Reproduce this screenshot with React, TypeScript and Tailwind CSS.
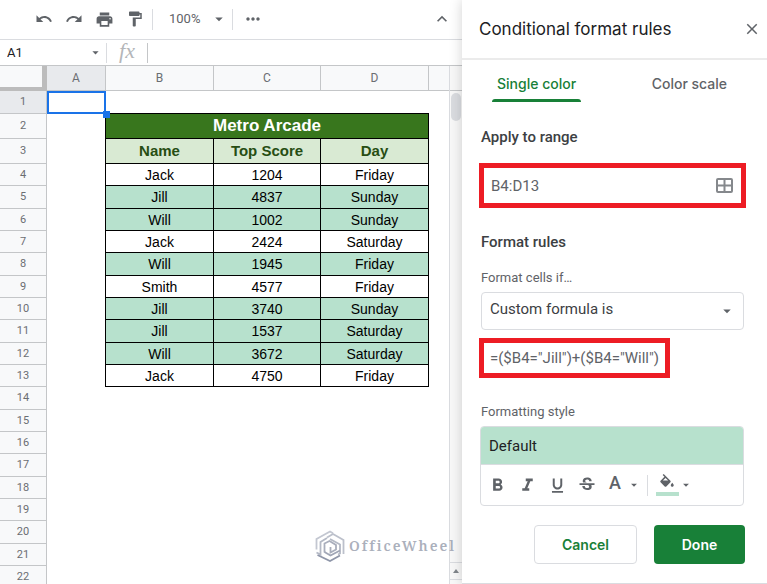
import { useState } from 'react';
import {
  MdArrowDropDown,
  MdClose,
  MdFormatBold,
  MdFormatItalic,
  MdFormatPaint,
  MdFormatUnderlined,
  MdKeyboardArrowUp,
  MdMoreHoriz,
  MdPrint,
  MdRedo,
  MdStrikethroughS,
  MdUndo,
} from 'react-icons/md';

const columns = ['A', 'B', 'C', 'D'];

const scores = [
  ['Jack', 1204, 'Friday'],
  ['Jill', 4837, 'Sunday'],
  ['Will', 1002, 'Sunday'],
  ['Jack', 2424, 'Saturday'],
  ['Will', 1945, 'Friday'],
  ['Smith', 4577, 'Friday'],
  ['Jill', 3740, 'Sunday'],
  ['Jill', 1537, 'Saturday'],
  ['Will', 3672, 'Saturday'],
  ['Jack', 4750, 'Friday'],
];

const emptyRows = [14, 15, 16, 17, 18, 19, 20, 21, 22];

const rowHead = 'border-r border-b border-[#c4c6c8] bg-[#f8f9fa] p-0 font-normal text-[11px] leading-4 text-[#6b6e72]';
const cell = 'border-r border-b border-black p-0 text-center';

function rowHeight(n: number) {
  return n % 3 === 2 ? 'h-[23px]' : 'h-[22px]';
}

function matches(name: string | number) {
  return name === 'Jill' || name === 'Will';
}

function BucketIcon() {
  return (
    <svg viewBox="0 0 24 24" className="w-[18px] h-[18px]" fill="currentColor" aria-hidden="true">
      <path d="M16.56 8.94L7.62 0 6.21 1.41l2.38 2.38-5.15 5.15a1.49 1.49 0 0 0 0 2.12l5.5 5.5c.29.29.68.44 1.06.44s.77-.15 1.06-.44l5.5-5.5c.59-.58.59-1.53 0-2.12zM6.5 8.7L10 5.21 13.5 8.7zM19 11.5s-2 2.17-2 3.5c0 1.1.9 2 2 2s2-.9 2-2c0-1.33-2-3.5-2-3.5z" />
    </svg>
  );
}

function RangeIcon() {
  return (
    <svg viewBox="0 0 17 15" className="w-[17px] h-[15px]" fill="none" stroke="#85888c" strokeWidth="2" aria-hidden="true">
      <rect x="1" y="1" width="15" height="13" rx="1" />
      <path d="M8.5 1v13M1 7.5h15" />
    </svg>
  );
}

function WheelLogo() {
  return (
    <svg viewBox="0 0 30 32" className="w-[30px] h-8" fill="none" strokeWidth="1.8" aria-hidden="true">
      <path d="M1.5 19.5V9L15 1.5l3 1.8" stroke="#c3c7d1" />
      <path d="M12 7.5l6-3.5 10.5 6v14" stroke="#bcc0cb" />
      <path d="M1.5 22.5l4 2V12L12 8" stroke="#b4b9c5" />
      <path d="M15 9l10 5.5v9l-2 1" stroke="#b4b9c5" />
      <path d="M9.5 22.5v-9l5-2.5 6.500 4v4.500l-5.500 3v-5.500" stroke="#a9aebc" />
      <path d="M9.5 22l6 3.500 9.500-5" stroke="#a0a6b6" />
      <path d="M2.500 25l12.500 6 10-5.500" stroke="#8f96a9" />
    </svg>
  );
}

function Toolbar() {
  return (
    <div className="flex h-10 items-center border-b border-[#dadce0] pr-[10px] pb-px pl-[35px] text-[#5f6368]">
      <div className="flex gap-3">
        <button type="button" aria-label="Undo"><MdUndo size={18} /></button>
        <button type="button" aria-label="Redo"><MdRedo size={18} /></button>
        <button type="button" aria-label="Print"><MdPrint size={19} /></button>
        <button type="button" aria-label="Paint format"><MdFormatPaint size={18} /></button>
      </div>
      <div className="ml-2 h-[21px] w-px bg-[#dadce0]" />
      <div className="relative ml-4 flex items-center">
        <select aria-label="Zoom" className="w-[59px] appearance-none bg-transparent font-[Roboto,sans-serif] text-[13px] leading-5">
          <option>100%</option>
          <option>75%</option>
          <option>50%</option>
        </select>
        <MdArrowDropDown size={18} className="pointer-events-none absolute right-0" />
      </div>
      <div className="ml-1 h-[21px] w-px bg-[#dadce0]" />
      <button type="button" aria-label="More" className="ml-[10px]"><MdMoreHoriz size={20} /></button>
      <button type="button" aria-label="Hide menus" className="ml-auto"><MdKeyboardArrowUp size={20} /></button>
    </div>
  );
}

function FormulaBar() {
  return (
    <div className="flex h-[26px] items-center border-b border-[#c4c6c8]">
      <input aria-label="Name box" defaultValue="A1" className="w-[88px] pl-[7px] text-[13px] leading-5 text-[#202124] outline-none" />
      <MdArrowDropDown size={15} className="text-[#5f6368]" />
      <div className="ml-[3px] h-5 w-px bg-[#dadce0]" />
      <span className="w-10 pb-1 text-center font-['Liberation_Serif',serif] text-[22px] leading-5 italic text-[#b4b6b9]">fx</span>
      <div className="h-5 w-px bg-[#c4c6c8]" />
      <input aria-label="Formula" className="min-w-0 flex-1 px-2 text-[13px] outline-none" />
    </div>
  );
}

function Sheet() {
  return (
    <table className="w-full table-fixed border-separate border-spacing-0 font-['Liberation_Sans',Arial,sans-serif] text-[14px] leading-5 text-black">
      <colgroup>
        <col className="w-[47px]" />
        <col className="w-[59px]" />
        <col className="w-[108px]" />
        <col className="w-[107px]" />
        <col className="w-[108px]" />
        <col />
      </colgroup>
      <thead>
        <tr className="h-[25px] font-[Roboto,sans-serif] text-[12px] leading-4 text-[#6b6e72]">
          <td className="border-r-[5px] border-b-4 border-[#bcbcbc] bg-[#f8f9fa] p-0" />
          {columns.map((c) => (
            <th
              key={c}
              scope="col"
              className={`border-r border-b border-[#c4c6c8] p-0 font-normal ${c === 'A' ? 'bg-[#e8eaed]' : 'bg-[#f8f9fa]'}`}
            >
              {c}
            </th>
          ))}
          <td className="border-b border-[#c4c6c8] bg-[#f8f9fa] p-0" />
        </tr>
      </thead>
      <tbody>
        <tr className="h-[23px]">
          <th scope="row" className="border-r border-b border-[#c4c6c8] bg-[#e8eaed] p-0 font-[Roboto,sans-serif] text-[11px] leading-4 font-normal text-[#6b6e72]">
            1
          </th>
          <td className="relative p-0 ring-2 ring-inset ring-[#1a73e8]">
            <span className="absolute -right-1 -bottom-1 h-[7px] w-[7px] bg-[#1a73e8]" />
          </td>
          <td colSpan={3} className="border-b border-black p-0" />
          <td />
        </tr>
        <tr className="h-[25px]">
          <th scope="row" className={`${rowHead} font-[Roboto,sans-serif]`}>2</th>
          <td className="border-r border-black p-0" />
          <td colSpan={3} className={`${cell} bg-[#38761d] text-[17px] font-bold text-white`}>Metro Arcade</td>
          <td />
        </tr>
        <tr className="h-[25px]">
          <th scope="row" className={`${rowHead} font-[Roboto,sans-serif]`}>3</th>
          <td className="border-r border-black p-0" />
          {['Name', 'Top Score', 'Day'].map((h) => (
            <td key={h} className={`${cell} bg-[#d9ead3] text-[15px] font-bold text-[#274e13]`}>{h}</td>
          ))}
          <td />
        </tr>
        {scores.map((row, i) => (
          <tr key={i} className={rowHeight(i + 4)}>
            <th scope="row" className={`${rowHead} font-[Roboto,sans-serif]`}>{i + 4}</th>
            <td className="border-r border-black p-0" />
            {row.map((value, j) => (
              <td key={j} className={`${cell} ${matches(row[0]) ? 'bg-[#b7e1cd]' : 'bg-white'}`}>{value}</td>
            ))}
            <td />
          </tr>
        ))}
        {emptyRows.map((n) => (
          <tr key={n} className={rowHeight(n)}>
            <th scope="row" className={`${rowHead} font-[Roboto,sans-serif]`}>{n}</th>
            <td colSpan={5} />
          </tr>
        ))}
      </tbody>
    </table>
  );
}

function RulesPanel() {
  const [tab, setTab] = useState('single');
  const [range, setRange] = useState('B4:D13');
  const [formula, setFormula] = useState('=($B4="Jill")+($B4="Will")');

  return (
    <aside className="z-10 flex w-[305px] shrink-0 flex-col border-b border-[#dadce0] bg-white text-[#3c4043] shadow-[0_0_12px_rgba(0,0,0,0.18)]">
      <header className="flex h-[60px] shrink-0 items-center justify-between border-b-2 border-[#ebebeb] pr-[6px] pl-[17px]">
        <h2 className="font-[Inter,sans-serif] text-[17px] leading-6 text-[#202124]">Conditional format rules</h2>
        <button type="button" aria-label="Close" className="text-[#5f6368]"><MdClose size={18} /></button>
      </header>

      <div role="tablist" className="flex justify-between pt-3 pr-10 pl-[30px] font-[Inter,sans-serif] text-[14px] leading-6 font-medium">
        <button
          type="button"
          role="tab"
          aria-selected={tab === 'single'}
          onClick={() => setTab('single')}
          className="text-[#188038]"
        >
          <span className="px-[5px]">Single color</span>
          <span className="mt-[3px] block h-[3px] rounded-t-sm bg-[#188038]" />
        </button>
        <button
          type="button"
          role="tab"
          aria-selected={tab === 'scale'}
          onClick={() => setTab('scale')}
          className="self-start text-[#5f6368]"
        >
          Color scale
        </button>
      </div>

      <div className="flex flex-col pt-[25px] pr-[21px] pl-[17px] text-[15px] leading-5">
        <label htmlFor="range" className="ml-[2px] font-medium">Apply to range</label>
        <div className="mt-4 flex h-[45px] items-center border-[5px] border-[#ed1c24] pr-2 pl-[7px]">
          <input
            id="range"
            value={range}
            onChange={(e) => setRange(e.target.value)}
            className="min-w-0 flex-1 text-[#5f6368] outline-none"
          />
          <button type="button" aria-label="Select data range"><RangeIcon /></button>
        </div>

        <h3 className="mt-6 ml-[2px] font-medium">Format rules</h3>
        <label htmlFor="condition" className="mt-4 ml-[2px] text-[13px] text-[#5f6368]">Format cells if…</label>
        <div className="relative mt-1 mr-[2px] ml-[2px] flex items-center">
          <select
            id="condition"
            className="h-[38px] w-full appearance-none rounded border border-[#dadce0] bg-white pb-1 pl-2"
          >
            <option>Custom formula is</option>
            <option>Cell is empty</option>
            <option>Text contains</option>
          </select>
          <MdArrowDropDown size={18} className="pointer-events-none absolute right-2 text-[#5f6368]" />
        </div>
        <input
          aria-label="Value or formula"
          value={formula}
          onChange={(e) => setFormula(e.target.value)}
          className="mt-2 h-10 w-[191px] border-[5px] border-[#ed1c24] pl-[6px] text-[#5f6368] outline-none"
        />

        <h4 className="mt-6 ml-[2px] text-[13px] text-[#5f6368]">Formatting style</h4>
        <div className="mt-1 mr-[2px] ml-px overflow-hidden rounded border border-[#dadce0]">
          <button type="button" className="block h-[37px] w-full bg-[#b7e1cd] pl-2 text-left text-[#202124]">
            Default
          </button>
          <div className="flex h-[41px] items-center border-t border-[#dadce0] pl-[6px] text-[#5f6368]">
            <button type="button" aria-label="Bold"><MdFormatBold size={21} /></button>
            <button type="button" aria-label="Italic" className="ml-[9px]"><MdFormatItalic size={21} /></button>
            <button type="button" aria-label="Underline" className="ml-[10px]"><MdFormatUnderlined size={19} /></button>
            <button type="button" aria-label="Strikethrough" className="ml-[10px]"><MdStrikethroughS size={20} /></button>
            <button type="button" aria-label="Text color" className="ml-3 flex items-center">
              <span className="pb-1 text-[18px] font-medium">A</span>
              <MdArrowDropDown size={14} className="ml-[6px]" />
            </button>
            <div className="ml-[6px] h-[21px] w-px bg-[#dadce0]" />
            <button type="button" aria-label="Fill color" className="ml-2 flex items-center">
              <span className="flex w-[23px] flex-col items-center border-b-4 border-[#b7e1cd]"><BucketIcon /></span>
              <MdArrowDropDown size={14} />
            </button>
          </div>
        </div>
      </div>

      <div className="mt-[19px] flex justify-end gap-[17px] pr-[22px] font-[Inter,sans-serif] text-[14px] font-semibold">
        <button type="button" className="h-[39px] w-[103px] rounded border border-[#dadce0] text-[#188038]">Cancel</button>
        <button type="button" className="h-[39px] w-[91px] rounded bg-[#188038] text-white">Done</button>
      </div>
    </aside>
  );
}

export default function App() {
  return (
    <div className="flex h-screen overflow-hidden bg-white font-[Roboto,sans-serif]">
      <main className="relative flex min-w-0 flex-1 flex-col">
        <Toolbar />
        <FormulaBar />
        <div className="flex min-h-0 flex-1">
          <div className="min-w-0 flex-1 overflow-hidden">
            <Sheet />
          </div>
          <div className="flex w-[13px] shrink-0 flex-col border-l border-[#dadce0] bg-[#f8f8f8]">
            <div className="h-[25px] shrink-0 border-b border-[#c4c6c8]" />
            <div className="mx-px mt-[2px] h-7 rounded-full bg-[#dadce0]" />
            <div className="mt-auto mb-1 flex h-[18px] items-center justify-center border-y border-[#dadce0] text-[#80868b]">
              <svg viewBox="0 0 6 4" className="h-1 w-[6px]" fill="currentColor" aria-hidden="true">
                <path d="M3 0l3 4H0z" />
              </svg>
            </div>
          </div>
        </div>
        <div className="absolute right-[6px] bottom-[22px] flex items-center gap-1">
          <WheelLogo />
          <span className="font-['Noto_Serif','DejaVu_Serif',serif] text-[14px] leading-5 font-semibold tracking-[2px] text-[#abb0bc]">OfficeWheel</span>
        </div>
      </main>
      <RulesPanel />
    </div>
  );
}
